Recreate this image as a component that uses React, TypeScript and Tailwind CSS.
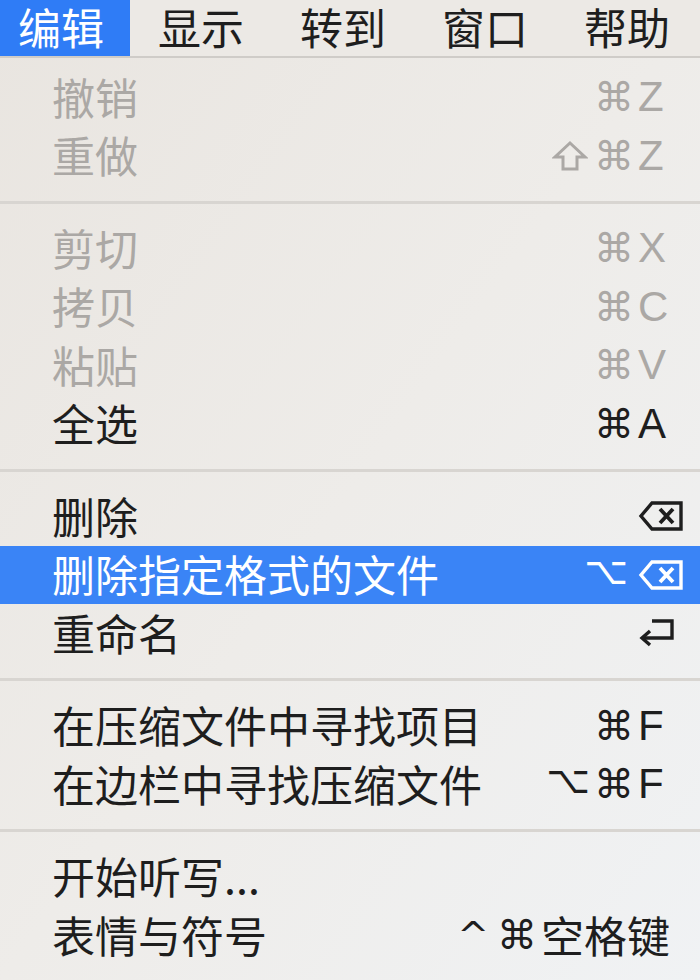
import React from 'react';

type Item = {
  label: string;
  mods?: React.ReactNode;
  key?: React.ReactNode;
  wideKey?: string;
  disabled?: boolean;
  active?: boolean;
};

type Entry = Item | 'sep';

const cjk = { fontFamily: '"Noto Sans CJK SC", "Noto Sans", sans-serif' };
const sym = { fontFamily: '"DejaVu Sans", "Liberation Sans", sans-serif' };
const latin = { fontFamily: '"Liberation Sans", Arial, sans-serif' };

function DeleteKey() {
  return (
    <svg width="46" height="32" viewBox="0 0 46 32" fill="none" stroke="currentColor" strokeWidth="3.4" strokeLinejoin="miter">
      <path d="M14 3 H43 V29 H14 L3 16 Z" />
      <path d="M22 9 L35 23 M35 9 L22 23" strokeWidth="3.8" />
    </svg>
  );
}

function ReturnKey() {
  return (
    <svg width="38" height="30" viewBox="0 0 38 30" fill="none" stroke="currentColor" strokeWidth="3.4">
      <path d="M14 3 H34 V20 H5" />
      <path d="M12 13 L4 20 L12 27" strokeLinejoin="miter" />
    </svg>
  );
}

function ShiftKey() {
  return (
    <svg width="36" height="32" viewBox="0 0 36 32" fill="none" stroke="currentColor" strokeWidth="3" strokeLinejoin="miter" className="mr-[6px]">
      <path d="M18 3 L33 17 H25 V29 H11 V17 H3 Z" />
    </svg>
  );
}

const cmd = <span className="text-[40px]">⌘</span>;
const opt = <span className="text-[38px]">⌥</span>;

const entries: Entry[] = [
  { label: '撤销', mods: cmd, key: 'Z', disabled: true },
  { label: '重做', mods: <><ShiftKey />{cmd}</>, key: 'Z', disabled: true },
  'sep',
  { label: '剪切', mods: cmd, key: 'X', disabled: true },
  { label: '拷贝', mods: cmd, key: 'C', disabled: true },
  { label: '粘贴', mods: cmd, key: 'V', disabled: true },
  { label: '全选', mods: cmd, key: 'A' },
  'sep',
  { label: '删除', key: <DeleteKey /> },
  { label: '删除指定格式的文件', mods: <span className="mr-[6px]">{opt}</span>, key: <DeleteKey />, active: true },
  { label: '重命名', key: <ReturnKey /> },
  'sep',
  { label: '在压缩文件中寻找项目', mods: cmd, key: 'F' },
  { label: '在边栏中寻找压缩文件', mods: <><span className="mr-[4px]">{opt}</span>{cmd}</>, key: 'F' },
  'sep',
  { label: '开始听写...' },
  { label: '表情与符号', mods: <><span className="mr-[8px] text-[38px]">^</span>{cmd}</>, wideKey: '空格键' },
];

function Row({ item }: { item: Item }) {
  const color = item.active
    ? 'bg-[#3a84f6] text-white'
    : item.disabled
      ? 'text-[#aba8a5]'
      : 'text-[#1e1e1e]';
  return (
    <div className={`flex h-[58.5px] items-center pl-[52px] ${color}`}>
      <span className="flex-1 pb-[3px] text-[43px] leading-[52px]" style={cjk}>
        {item.label}
      </span>
      {item.wideKey ? (
        <span className="mr-[30px] flex items-center">
          <span className="mr-[4px] flex items-center leading-[52px]" style={sym}>{item.mods}</span>
          <span className="pb-[3px] text-[43px] leading-[52px]" style={cjk}>{item.wideKey}</span>
        </span>
      ) : (
        <span className="flex items-center">
          <span className="flex items-center justify-end leading-[52px]" style={sym}>
            {item.mods}
          </span>
          <span className="flex w-[66px] items-center pl-[4px] text-[42px] leading-[52px]" style={latin}>
            {item.key}
          </span>
        </span>
      )}
    </div>
  );
}

export default function App() {
  const titles = ['显示', '转到', '窗口', '帮助'];
  return (
    <div className="h-[980px] w-[700px] overflow-hidden bg-gradient-to-br from-[#e9e5e0] via-[#eeece9] to-[#f0f2f4]">
      <div className="flex h-[58px] items-center border-b-2 border-[#cfccc8] bg-[#ece9e5] text-[43px] leading-[50px] text-[#1e1e1e]" style={cjk}>
        <div className="flex h-full items-center bg-[#2f7cf6] pb-[4px] pl-[18px] pr-[26px] text-white">编辑</div>
        {titles.map(t => (
          <div key={t} className="px-[28px] pb-[4px]">{t}</div>
        ))}
      </div>
      <div className="pt-[10px]">
        {entries.map((e, i) =>
          e === 'sep' ? (
            <div key={i} className="flex h-[34px] items-center">
              <div className="h-[3px] w-full bg-[#d8d5d1]" />
            </div>
          ) : (
            <Row key={i} item={e} />
          )
        )}
      </div>
    </div>
  );
}
